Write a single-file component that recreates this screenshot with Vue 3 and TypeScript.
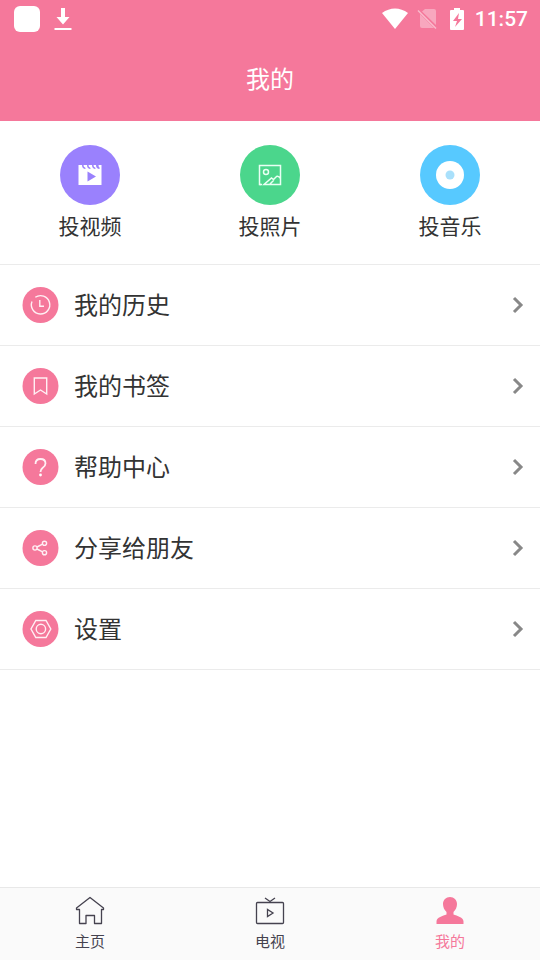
<script setup lang="ts">
import { ref } from 'vue'

interface Entry {
  id: string
  label: string
}

const shortcuts: Entry[] = [
  { id: 'video', label: '投视频' },
  { id: 'photo', label: '投照片' },
  { id: 'music', label: '投音乐' },
]

const entries: Entry[] = [
  { id: 'history', label: '我的历史' },
  { id: 'bookmark', label: '我的书签' },
  { id: 'help', label: '帮助中心' },
  { id: 'share', label: '分享给朋友' },
  { id: 'settings', label: '设置' },
]

const tabs: Entry[] = [
  { id: 'home', label: '主页' },
  { id: 'tv', label: '电视' },
  { id: 'mine', label: '我的' },
]

const activeTab = ref<string>('mine')
</script>

<template>
  <div class="screen">
    <header class="top">
      <div class="status">
        <div class="status-left">
          <span class="app-badge"></span>
          <svg width="18" height="24" viewBox="0 0 18 24" fill="#fff" aria-hidden="true">
            <path d="M7 1h4v9h4.500L9 17.500 2.500 10H7z" />
            <path d="M.5 21h17v2H.5z" />
          </svg>
        </div>
        <div class="status-right">
          <svg width="26" height="22" viewBox="0 0 26 22" aria-hidden="true">
            <path d="M0 5C8-1 18-1 26 5L13 21z" fill="#fff" />
          </svg>
          <svg class="sim" width="20" height="22" viewBox="0 0 20 22" aria-hidden="true">
            <path d="M8 1h9q2 0 2 2v14L5 3.500z" fill="#fff" opacity=".35" />
            <path d="M3 6l14 14H5q-2 0-2-2z" fill="#fff" opacity=".35" />
            <path d="M1 2.500L19 20.500" stroke="#fff" stroke-width="1.500" opacity=".5" />
          </svg>
          <svg class="battery" width="16" height="22" viewBox="0 0 16 22" aria-hidden="true">
            <path d="M5 0h6v2h3q1 0 1 1v18q0 1-1 1H2q-1 0-1-1V3q0-1 1-1h3z" fill="#fff" />
            <path d="M10 5L4 13h4l-2 6 7-8H9z" fill="#f5789b" />
          </svg>
          <time class="clock">11:57</time>
        </div>
      </div>
      <h1 class="title">我的</h1>
    </header>

    <main class="content">
      <section class="shortcuts">
        <button v-for="item in shortcuts" :key="item.id" type="button" class="shortcut">
          <span class="disc" :class="item.id">
            <svg v-if="item.id === 'video'" width="24" height="22" viewBox="0 0 24 22" aria-hidden="true">
              <path
                d="M.5 1H4q0 3.500 3 4 1.500-1 0-1.500Q5.500 3 5.500 1H9q0 3.500 3 4 1.500-1 0-1.500Q10.500 3 10.500 1H14q0 3.500 3 4 1.500-1 0-1.500Q15.500 3 15.500 1H18q0 3.500 3 4 1.500-1 .5-1.500Q20.500 3 20.500 1h3v20H.5z"
                fill="#fff"
              />
              <path d="M9.500 7.500l8.500 5-8.500 5z" fill="#9a81fd" />
            </svg>
            <svg
              v-else-if="item.id === 'photo'"
              width="24"
              height="22"
              viewBox="0 0 24 22"
              fill="none"
              stroke="#e9fff3"
              stroke-width="1.500"
              aria-hidden="true"
            >
              <path d="M3 20.500H1.500v-19h21v19H6L13.500 14l2 1.500 3-3q2-1 4 2M12 20l4-4" />
              <path d="M1.500 20.500H4" />
              <circle cx="8" cy="8" r="2.500" />
            </svg>
            <svg v-else width="28" height="28" viewBox="0 0 28 28" aria-hidden="true">
              <circle cx="14" cy="14" r="14" fill="#fff" />
              <circle cx="14" cy="14" r="4.500" fill="#a9e0fb" />
            </svg>
          </span>
          <span class="shortcut-label">{{ item.label }}</span>
        </button>
      </section>

      <ul class="list">
        <li v-for="item in entries" :key="item.id">
          <button type="button" class="row">
            <svg
              width="37"
              height="36"
              viewBox="0 0 37 36"
              fill="none"
              stroke="#fff0f4"
              stroke-width="1.400"
              aria-hidden="true"
            >
              <circle cx="18.500" cy="18" r="18" fill="#f5789b" stroke="none" />
              <template v-if="item.id === 'history'">
                <path d="M13.300 10.300A9.200 9.200 0 1 1 10 14.500" />
                <path d="M17.800 13v6.300h4.200" />
              </template>
              <path v-else-if="item.id === 'bookmark'" d="M12.300 10h12.400v16l-6.200-4-6.200 4z" />
              <template v-else-if="item.id === 'help'">
                <path d="M13.500 15q0-5 5-5t5 4.500q0 2.500-3 4.500-2 1.500-2 4" stroke-width="1.800" />
                <circle cx="18.500" cy="26" r="1.400" fill="#fff" stroke="none" />
              </template>
              <template v-else-if="item.id === 'share'">
                <circle cx="13" cy="18" r="2.100" />
                <circle cx="22.500" cy="13.300" r="2.100" />
                <circle cx="22.500" cy="22.700" r="2.100" />
                <path d="M14.900 17l5.700-2.800M14.900 19l5.700 2.800" />
              </template>
              <template v-else>
                <path d="M13.800 9.500h10.200l4.800 8.500-4.800 8.500H13.800L9 18z" />
                <circle cx="18.900" cy="18" r="4.700" />
              </template>
            </svg>
            <span class="row-label">{{ item.label }}</span>
            <svg width="12" height="18" viewBox="0 0 12 18" fill="none" aria-hidden="true">
              <path d="M2 2l7 7-7 7" stroke="#888" stroke-width="3" />
            </svg>
          </button>
        </li>
      </ul>
    </main>

    <nav class="tabs">
      <button
        v-for="tab in tabs"
        :key="tab.id"
        type="button"
        class="tab"
        :class="{ active: tab.id === activeTab }"
        @click="activeTab = tab.id"
      >
        <svg
          v-if="tab.id === 'home'"
          width="30"
          height="30"
          viewBox="0 0 30 30"
          fill="none"
          stroke="currentColor"
          stroke-width="1.300"
          stroke-linejoin="round"
          aria-hidden="true"
        >
          <path d="M4.500 13.500H1.500v-1.500L15 1.500 28.500 12v1.500h-2v14H19.500v-8h-8.500v8H4.500z" />
        </svg>
        <svg
          v-else-if="tab.id === 'tv'"
          width="30"
          height="30"
          viewBox="0 0 30 30"
          fill="none"
          stroke="currentColor"
          stroke-width="1.300"
          aria-hidden="true"
        >
          <rect x="1.500" y="6.500" width="27" height="21" rx="1" />
          <path d="M10 2l5 3.500L20 2" />
          <path d="M12.500 13.500v7l5.500-3.500z" />
        </svg>
        <svg v-else width="30" height="30" viewBox="0 0 30 30" fill="currentColor" aria-hidden="true">
          <path
            d="M15 1c4 0 7 3 7 7 0 3-1.300 6-3.500 8v2.500c3.500 1.500 10 2.500 10 7V28h-27v-2.500c0-4.500 6.500-5.500 10-7V16C9.300 14 8 11 8 8c0-4 3-7 7-7z"
          />
        </svg>
        <span>{{ tab.label }}</span>
      </button>
    </nav>
  </div>
</template>

<style>
body {
  margin: 0;
  background: #fff;
}
</style>

<style scoped>
.screen {
  display: flex;
  flex-direction: column;
  min-height: 100vh;
  background: #fff;
  color: #333;
  font-family: 'Noto Sans CJK SC', sans-serif;
}

button {
  margin: 0;
  padding: 0;
  border: 0;
  background: none;
  color: inherit;
  font: inherit;
  cursor: pointer;
}

svg {
  display: block;
  flex: none;
}

.top {
  background: #f5789b;
  color: #fff;
}

.status {
  display: flex;
  justify-content: space-between;
  align-items: center;
  height: 38px;
  padding: 0 12px 0 14px;
}

.status-left {
  display: flex;
  align-items: center;
  gap: 14px;
}

.app-badge {
  width: 26px;
  height: 26px;
  border-radius: 6px;
  background: #fff;
}

.status-right {
  display: flex;
  align-items: center;
}

.sim {
  margin-left: 9px;
}

.battery {
  margin: 0 10px 0 12px;
}

.clock {
  font-family: Roboto, sans-serif;
  font-size: 21px;
  font-weight: 500;
  line-height: 40px;
}

.title {
  margin: 0;
  padding-bottom: 3px;
  font-size: 24px;
  font-weight: 400;
  line-height: 80px;
  text-align: center;
}

.content {
  flex: 1;
}

.shortcuts {
  display: grid;
  grid-template-columns: repeat(3, 1fr);
  padding: 24px 0 23px;
  border-bottom: 1px solid #ebebeb;
}

.shortcut {
  display: flex;
  flex-direction: column;
  align-items: center;
  gap: 4px;
}

.disc {
  display: flex;
  align-items: center;
  justify-content: center;
  width: 60px;
  height: 60px;
  border-radius: 50%;
}

.disc.video {
  background: #9a81fd;
}

.disc.photo {
  background: #4bd68c;
}

.disc.music {
  background: #57c9ff;
}

.shortcut-label {
  font-size: 21px;
  line-height: 32px;
}

.list {
  margin: 0;
  padding: 0;
  list-style: none;
}

.row {
  display: flex;
  align-items: center;
  width: 100%;
  height: 81px;
  padding: 0 16px 0 22px;
  border-bottom: 1px solid #ebebeb;
  text-align: left;
}

.row-label {
  flex: 1;
  padding: 0 0 2px 15px;
  font-size: 24px;
  line-height: 36px;
}

.tabs {
  display: grid;
  grid-template-columns: repeat(3, 1fr);
  border-top: 1px solid #e8e8e8;
  background: #fafafa;
}

.tab {
  display: flex;
  flex-direction: column;
  align-items: center;
  gap: 4px;
  padding: 8px 0;
  color: #45424f;
  font-size: 15px;
  line-height: 22px;
}

.tab.active {
  color: #f5789b;
}
</style>
